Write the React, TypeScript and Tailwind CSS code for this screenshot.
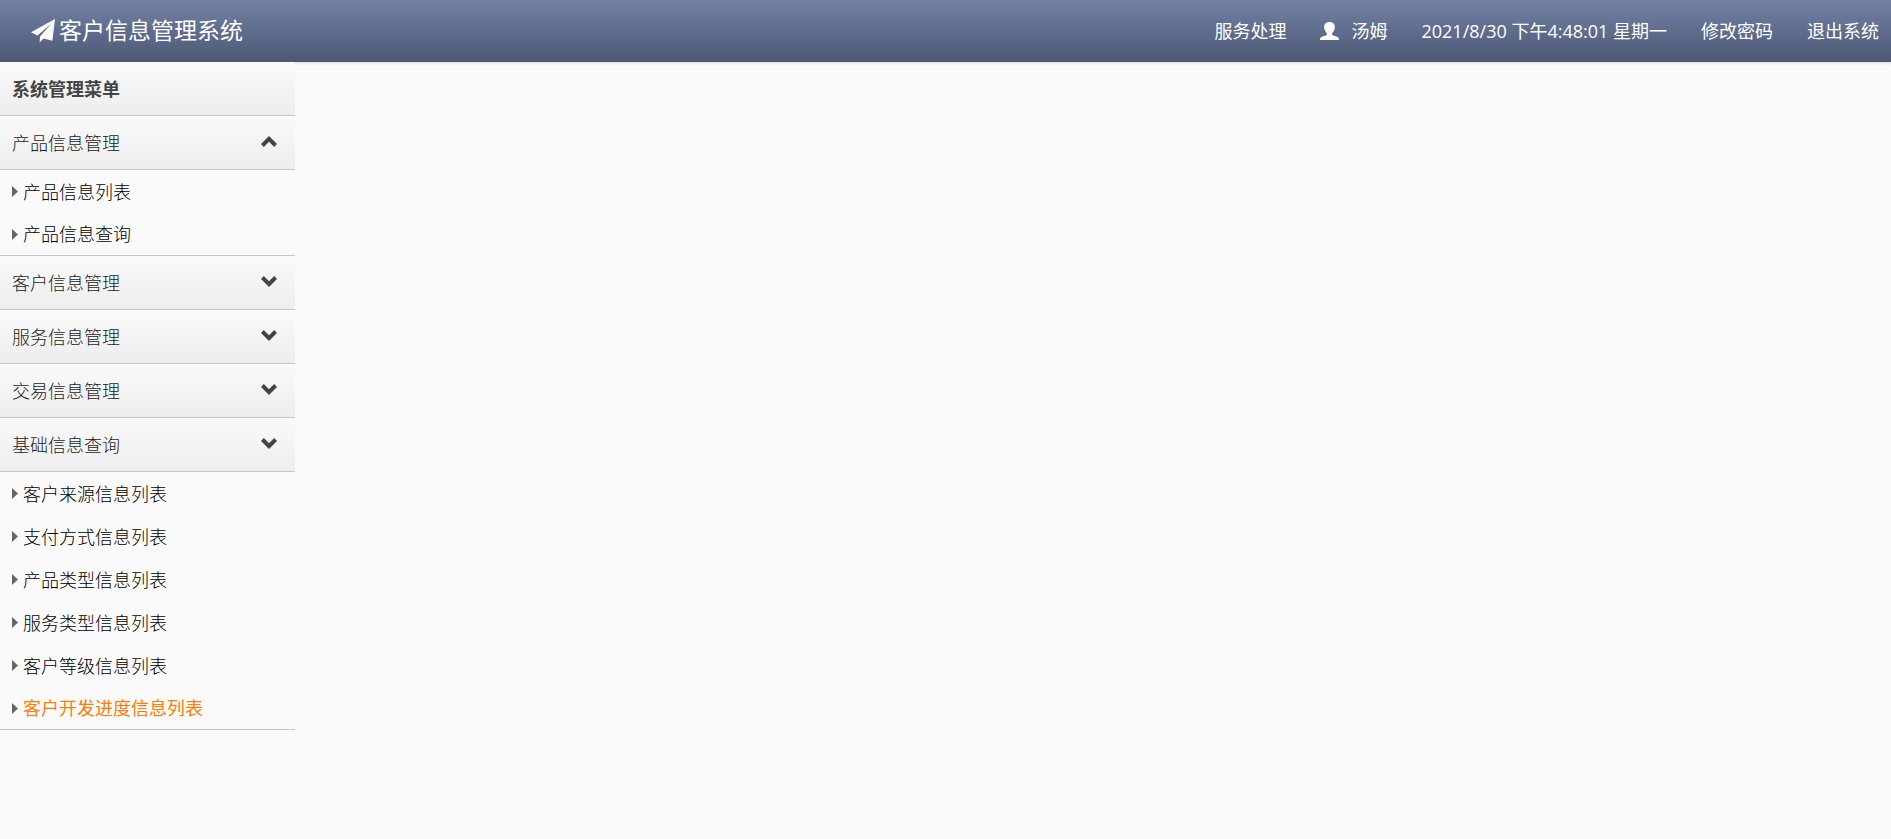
import { useState } from "react";

type Group = { title: string; items: string[]; expanded?: boolean };

const groups: Group[] = [
  { title: "产品信息管理", items: ["产品信息列表", "产品信息查询"], expanded: true },
  { title: "客户信息管理", items: [] },
  { title: "服务信息管理", items: [] },
  { title: "交易信息管理", items: [] },
  {
    title: "基础信息查询",
    items: [
      "客户来源信息列表",
      "支付方式信息列表",
      "产品类型信息列表",
      "服务类型信息列表",
      "客户等级信息列表",
      "客户开发进度信息列表",
    ],
  },
];

function PlaneIcon() {
  return (
    <svg viewBox="0 0 24 24" className="h-6 w-6" fill="currentColor" aria-hidden="true">
      <path d="M24 0 L0 13.3 L6.4 16.6 L20.4 4.6 L9 17.6 L8.6 23.6 L12.6 19.4 L21.4 21.8 Z" />
    </svg>
  );
}

function UserIcon() {
  return (
    <svg viewBox="0 0 19 18" className="h-[18px] w-[19px]" fill="currentColor" aria-hidden="true">
      <path d="M9.5 0C13 0 15 2.1 14.8 5.2C14.6 8 13.6 9.6 12.2 10.9V13C14.2 14 17.6 14.6 18.6 15.8C19 16.6 19 18 19 18H0C0 18 0 16.6 .4 15.8C1.4 14.6 4.8 14 6.8 13V10.9C5.4 9.6 4.4 8 4.2 5.2C4 2.1 6 0 9.5 0Z" />
    </svg>
  );
}

function Chevron({ up }: { up?: boolean }) {
  return (
    <svg viewBox="0 0 16 11" className="mb-[3px] h-[11px] w-4 text-[#444]" fill="currentColor" aria-hidden="true">
      {up ? (
        <path d="M8 0 L16 8.1 L13.2 11 L8 5.7 L2.8 11 L0 8.1 Z" />
      ) : (
        <path d="M8 11 L16 2.9 L13.2 0 L8 5.3 L2.8 0 L0 2.9 Z" />
      )}
    </svg>
  );
}

function Caret() {
  return (
    <svg viewBox="0 0 6 11" className="h-[11px] w-1.5 text-[#666]" fill="currentColor" aria-hidden="true">
      <path d="M0 0 L6 5.5 L0 11 Z" />
    </svg>
  );
}

const row =
  "flex h-[54px] w-full items-center border-b border-[#c6c6c6] bg-linear-to-b from-[#fafafa] to-[#ededed] pr-[18px] pl-3";

export default function App() {
  const [active, setActive] = useState("客户开发进度信息列表");

  return (
    <div className="min-h-screen bg-[#fafafa] font-['Open_Sans','Noto_Sans_CJK_SC',sans-serif] text-lg font-light">
      <header className="flex h-[62px] items-center justify-between bg-linear-to-b from-[#7282a5] to-[#4d5875] pr-3 pl-[31px] font-normal whitespace-nowrap text-white shadow-[0_1px_3px_rgba(0,0,0,0.15)]">
        <h1 className="flex items-center gap-1 text-[23px]">
          <PlaneIcon />
          客户信息管理系统
        </h1>
        <nav className="flex items-center gap-[34px]">
          <a href="#service">服务处理</a>
          <a href="#user" className="flex items-center gap-3">
            <UserIcon />
            汤姆
          </a>
          <time>2021/8/30 下午4:48:01 星期一</time>
          <a href="#password">修改密码</a>
          <a href="#logout">退出系统</a>
        </nav>
      </header>
      <aside className="relative w-[295px]">
        <h2 className={`${row} font-bold text-[#444]`}>系统管理菜单</h2>
        {groups.map((g) => (
          <section key={g.title}>
            <button type="button" className={`${row} justify-between text-[#1c1c1c]`}>
              {g.title}
              <Chevron up={g.expanded} />
            </button>
            {g.items.length > 0 && (
              <ul>
                {g.items.map((item) => (
                  <li key={item} className="h-[43px] border-[#c6c6c6] last:border-b">
                    <a
                      href="#list"
                      onClick={() => setActive(item)}
                      className={`flex h-full items-center gap-[5px] pl-3 ${item === active ? "font-normal text-[#ff7d0a]" : "text-black"}`}
                    >
                      <Caret />
                      {item}
                    </a>
                  </li>
                ))}
              </ul>
            )}
          </section>
        ))}
      </aside>
    </div>
  );
}
